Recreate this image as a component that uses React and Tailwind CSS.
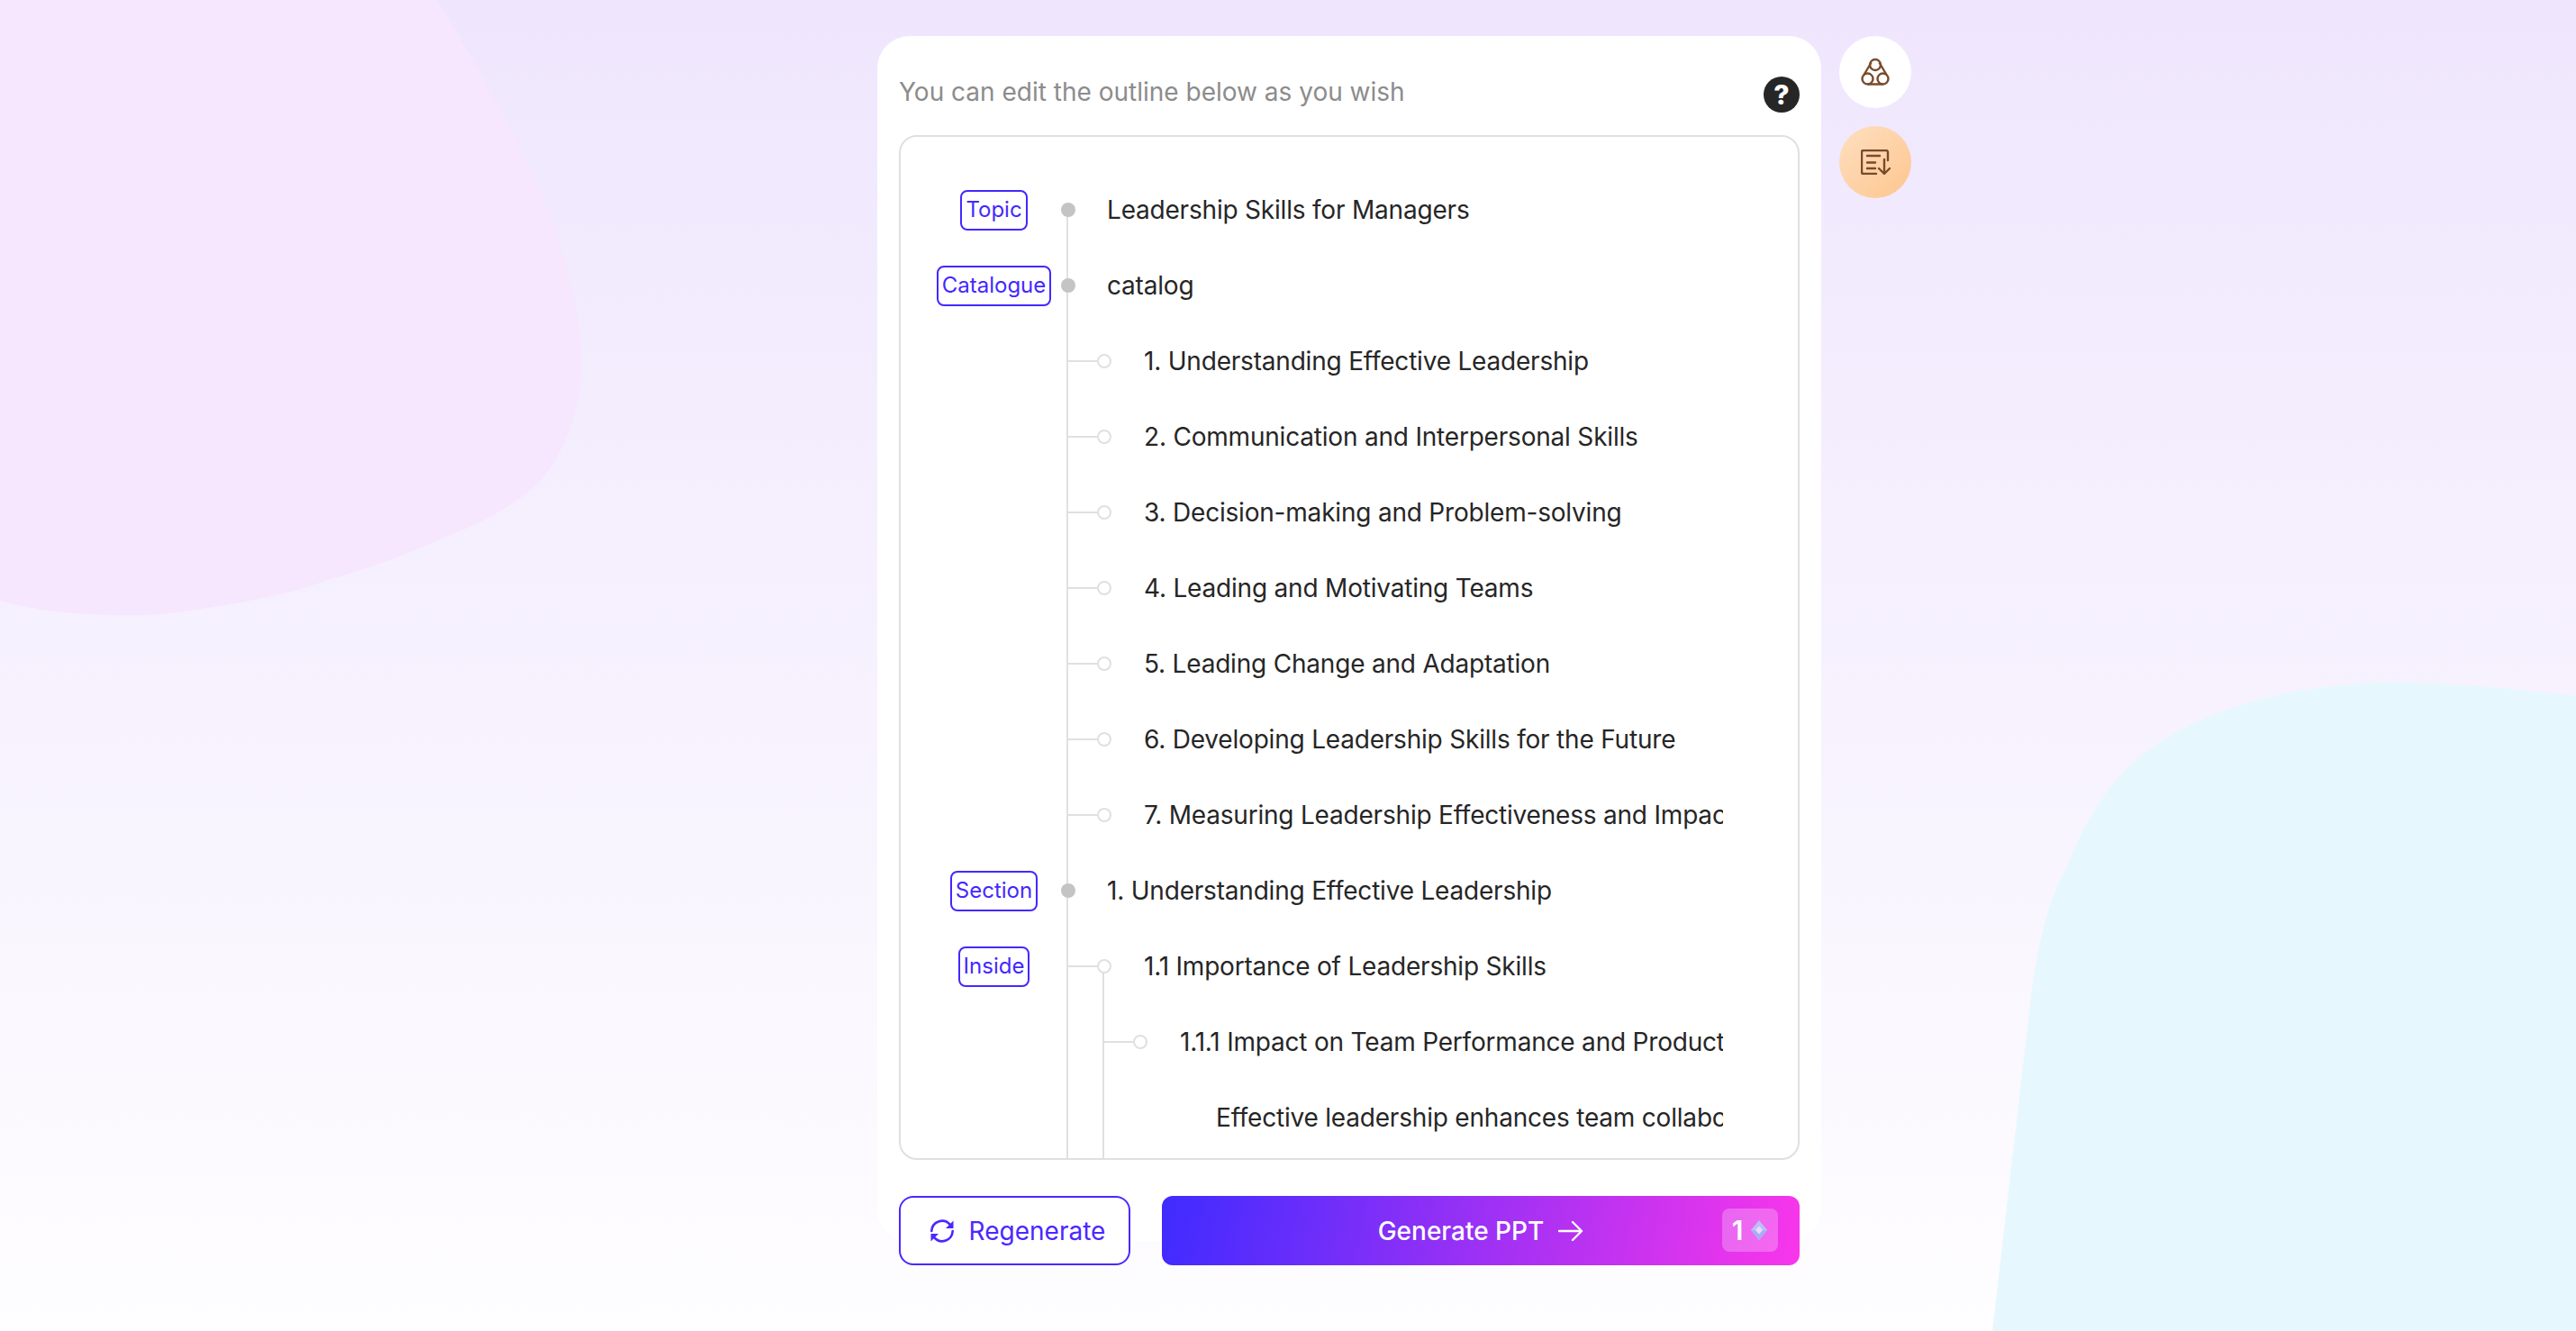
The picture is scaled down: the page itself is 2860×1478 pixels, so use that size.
import React from "react";

const ROWS = [
  { level: 0, tag: "Topic", text: "Leadership Skills for Managers" },
  { level: 0, tag: "Catalogue", text: "catalog" },
  { level: 1, text: "1. Understanding Effective Leadership" },
  { level: 1, text: "2. Communication and Interpersonal Skills" },
  { level: 1, text: "3. Decision-making and Problem-solving" },
  { level: 1, text: "4. Leading and Motivating Teams" },
  { level: 1, text: "5. Leading Change and Adaptation" },
  { level: 1, text: "6. Developing Leadership Skills for the Future" },
  { level: 1, text: "7. Measuring Leadership Effectiveness and Impact" },
  { level: 0, tag: "Section", text: "1. Understanding Effective Leadership" },
  { level: 1, tag: "Inside", text: "1.1 Importance of Leadership Skills" },
  { level: 2, text: "1.1.1 Impact on Team Performance and Productivity" },
  { level: 3, text: "Effective leadership enhances team collaboration and morale" },
];

const GUTTER = ["w-[62px]", "w-[103px]", "w-[143px]", "w-[183px]"];

function Row({ level, tag, text }) {
  return (
    <div className="relative flex h-[84px] items-center">
      <div className="flex w-[127px] shrink-0 justify-center">
        {tag && (
          <span className="flex h-[45px] items-center rounded-lg border-2 border-[#4328ff] px-1 text-[24px] text-[#4328ff]">
            {tag}
          </span>
        )}
      </div>
      <div className={`relative h-full shrink-0 ${GUTTER[level]}`}>
        {level === 0 && (
          <span className="absolute left-[11px] top-[34px] h-4 w-4 rounded-full bg-[#c4c4c4]" />
        )}
        {level === 1 && (
          <>
            <span className="absolute left-[18px] top-[41px] h-[2px] w-[36px] bg-[#e0e0e0]" />
            <span className="absolute left-[51px] top-[34px] h-4 w-4 rounded-full border-2 border-[#e0e0e0] bg-white" />
          </>
        )}
        {level === 2 && (
          <>
            <span className="absolute left-[58px] top-[41px] h-[2px] w-[36px] bg-[#e0e0e0]" />
            <span className="absolute left-[91px] top-[34px] h-4 w-4 rounded-full border-2 border-[#e0e0e0] bg-white" />
          </>
        )}
      </div>
      <div className="min-w-0 flex-1 overflow-hidden whitespace-nowrap text-[28px] tracking-[-0.2px] text-[#262626]">{text}</div>
    </div>
  );
}

function ThreeCircles() {
  return (
    <svg width="32" height="32" viewBox="0 0 32 32" fill="none" stroke="#7a4a2b" strokeWidth="2.4">
      <circle cx="16" cy="8" r="6" />
      <circle cx="7.5" cy="23.5" r="6" />
      <circle cx="24.5" cy="23.5" r="6" />
      <path d="M11.5 5.5 3.5 19M20.5 5.5 28.5 19M7.5 29.5h17" />
    </svg>
  );
}

function DocDown() {
  return (
    <svg width="33" height="28" viewBox="0 0 33 28" fill="none" stroke="#7a4a2b" strokeWidth="2.4" strokeLinecap="round" strokeLinejoin="round">
      <path d="M30 12V3a2 2 0 0 0-2-2H3a2 2 0 0 0-2 2v22a2 2 0 0 0 2 2h14" />
      <path d="M7 7h14M7 14.5h9M7 21h9" />
      <path d="M26 11v16M20 21l6 6 6-6" />
    </svg>
  );
}

function RefreshIcon() {
  return (
    <svg width="28" height="28" viewBox="0 0 28 28" fill="none" stroke="#4b28ff" strokeWidth="2.6" strokeLinecap="round">
      <path d="M2.3 14A11.7 11.7 0 0 1 22.5 6.5" />
      <path d="M25.7 14A11.7 11.7 0 0 1 5.5 21.5" />
      <path d="M26.5 2.5v8.5h-8.5Z" fill="#4b28ff" stroke="none" />
      <path d="M1.5 25.5v-8.5h8.5Z" fill="#4b28ff" stroke="none" />
    </svg>
  );
}

function Diamond() {
  return (
    <svg width="20" height="22" viewBox="0 0 20 22">
      <path d="M10 0 19 11 10 22 1 11Z" fill="#b9c0f8" />
      <path d="M10 11 19 11 10 22 1 11Z" fill="#a6aef5" />
      <path d="M10 6.5 14 11 10 15.5 6 11Z" fill="#f1d9fb" />
    </svg>
  );
}

export default function App() {
  return (
    <div className="relative flex h-[1478px] w-full overflow-hidden bg-gradient-to-b from-[#efe6fd] to-[#fefdff] pl-[974px] font-['Inter',sans-serif]">
      <svg className="absolute left-0 top-0" width="660" height="690" viewBox="0 0 660 690">
        <path d="M0 0H484C530 70 590 180 611 239C630 295 643 340 645 390C647 450 630 500 597 537C565 565 535 580 505 592C460 612 420 628 367 643C320 660 275 668 230 675C190 682 160 684 129 683C80 682 40 678 0 667Z" fill="#f6e6fe" />
      </svg>
      <svg className="absolute bottom-0 right-0" width="660" height="740" viewBox="0 0 660 740">
        <path d="M12 740L56 359C65 300 75 260 93 228C110 185 130 150 153 124C180 95 205 80 240 63C275 48 310 36 349 30C390 22 435 19 479 20C545 22 600 28 660 35V740Z" fill="#e6f8fe" />
      </svg>

      <div className="relative flex items-start gap-5 pt-10">
        <div className="flex h-[1338px] w-[1048px] flex-col rounded-[36px] bg-white px-6">
          <div className="flex h-[110px] shrink-0 items-center justify-between">
            <span className="mt-[14px] text-[28px] text-[#8c8c8c]">You can edit the outline below as you wish</span>
            <span className="mt-[20px] flex h-10 w-10 items-center justify-center rounded-full bg-[#262626] text-[30px] font-extrabold text-white">?</span>
          </div>
          <div className="relative h-[1138px] shrink-0 overflow-hidden rounded-[20px] border-2 border-[#e0e0e0] bg-white pl-[40px] pr-[83px] pt-[39px]">
            <span className="absolute bottom-0 left-[184px] top-[82px] w-[2px] bg-[#e0e0e0]" />
            <span className="absolute bottom-0 left-[224px] top-[922px] w-[2px] bg-[#e0e0e0]" />
            <div className="relative">
              {ROWS.map((r, i) => (
                <Row key={i} {...r} />
              ))}
            </div>
          </div>
          <div className="mt-10 flex h-[77px] shrink-0 gap-[35px]">
            <button className="flex w-[257px] items-center justify-center gap-4 rounded-2xl border-2 border-[#4b28ff] bg-white pl-[6px] text-[28px] text-[#4b28ff]">
              <RefreshIcon />
              Regenerate
            </button>
            <button className="relative flex flex-1 items-center justify-center gap-4 rounded-xl bg-[linear-gradient(100deg,#3f2bff,#f936ea)] text-[28px] font-medium text-white">
              Generate PPT
              <svg width="28" height="24" viewBox="0 0 28 24" fill="none" stroke="white" strokeWidth="2.4" strokeLinecap="round" strokeLinejoin="round">
                <path d="M1 12h25M16 2l10 10-10 10" />
              </svg>
              <span className="absolute right-6 top-[14px] flex h-12 w-[62px] items-center justify-center gap-2 rounded-lg bg-white/25 text-[30px] font-semibold">
                1
                <Diamond />
              </span>
            </button>
          </div>
        </div>
        <div className="flex flex-col gap-5">
          <div className="flex h-20 w-20 items-center justify-center rounded-full bg-white">
            <ThreeCircles />
          </div>
          <div className="flex h-20 w-20 items-center justify-center rounded-full bg-gradient-to-br from-[#fedfc0] to-[#fdc68e]">
            <DocDown />
          </div>
        </div>
      </div>
    </div>
  );
}
